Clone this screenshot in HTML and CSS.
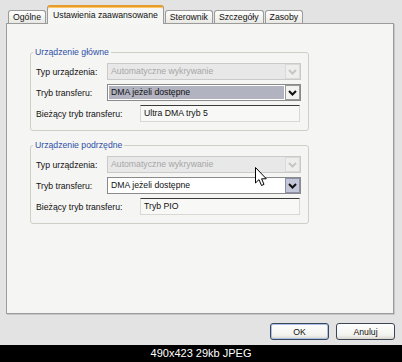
FILE: index.html
```html
<!DOCTYPE html>
<html lang="pl">
<head>
  <meta charset="UTF-8" />
  <title>Właściwości - Ustawienia zaawansowane</title>
  <link rel="stylesheet" href="styles.css">
</head>
<body>
  <div class="window">
    <!-- Tabs -->
    <div class="tabs">
      <div class="tab">Ogólne</div>
      <div class="tab active">Ustawienia zaawansowane</div>
      <div class="tab">Sterownik</div>
      <div class="tab">Szczegóły</div>
      <div class="tab">Zasoby</div>
    </div>

    <div class="panel">
      <fieldset class="group">
        <legend>Urządzenie główne</legend>
        <div class="rows">
          <div class="row">
            <span>Typ urządzenia:</span>
            <div class="combo disabled">
              <span class="value">Automatyczne wykrywanie</span>
              <span class="drop"><svg width="9" height="6" viewBox="0 0 9 6"><path d="M1 1 L4.5 4.5 L8 1" /></svg></span>
            </div>
          </div>
          <div class="row">
            <span>Tryb transferu:</span>
            <div class="combo">
              <span class="value selected">DMA jeżeli dostępne</span>
              <span class="drop"><svg width="9" height="6" viewBox="0 0 9 6"><path d="M1 1 L4.5 4.5 L8 1" /></svg></span>
            </div>
          </div>
          <div class="row">
            <span>Bieżący tryb transferu:</span>
            <div class="field">Ultra DMA tryb 5</div>
          </div>
        </div>
      </fieldset>

      <fieldset class="group">
        <legend>Urządzenie podrzędne</legend>
        <div class="rows">
          <div class="row">
            <span>Typ urządzenia:</span>
            <div class="combo disabled">
              <span class="value">Automatyczne wykrywanie</span>
              <span class="drop"><svg width="9" height="6" viewBox="0 0 9 6"><path d="M1 1 L4.5 4.5 L8 1" /></svg></span>
            </div>
          </div>
          <div class="row">
            <span>Tryb transferu:</span>
            <div class="combo">
              <span class="value">DMA jeżeli dostępne</span>
              <span class="drop hover"><svg width="9" height="6" viewBox="0 0 9 6"><path d="M1 1 L4.5 4.5 L8 1" /></svg></span>
            </div>
          </div>
          <div class="row">
            <span>Bieżący tryb transferu:</span>
            <div class="field">Tryb PIO</div>
          </div>
        </div>
      </fieldset>
    </div>

    <div class="footer">
      <button class="btn default">OK</button>
      <button class="btn">Anuluj</button>
    </div>

    <!-- mouse pointer over the second group -->
    <svg class="cursor" width="13" height="20" viewBox="0 0 13 20">
      <path d="M0.5 0.5 L0.5 16 L4 12.6 L6.5 18.5 L9 17.4 L6.6 11.8 L11.3 11.8 Z" />
    </svg>
  </div>
  <div class="caption">490x423 29kb JPEG</div>
</body>
</html>
```

FILE: styles.css
```css
body {
  margin: 0;
  width: 402px;
  height: 362px;
  overflow: hidden;
  font-family: "Liberation Sans", Arial, sans-serif;
  font-size: 8.7px;
  color: #111;
}
.window {
  position: relative;
  height: 345px;
  box-sizing: border-box;
  padding-top: 5px;
  background: #e3e3e3;
}
.tabs {
  position: relative;
  z-index: 1;
  display: flex;
  align-items: flex-end;
  height: 18px;
  padding-left: 8px;
}
.tab {
  box-sizing: border-box;
  height: 13px;
  line-height: 12px;
  padding: 0 4px;
  margin-right: 1px;
  border: 1px solid #9b9b9b;
  border-bottom: none;
  border-radius: 3px 3px 0 0;
  background: linear-gradient(#ffffff, #e8e8e3);
  white-space: nowrap;
}
.tab.active {
  height: 19px;
  margin-bottom: -1px;
  padding: 0 5px;
  line-height: 16px;
  border-top: 2px solid #e59b2e;
  box-shadow: inset 0 1px 0 #ffc865;
  background: #f6f6f4;
}
.panel {
  box-sizing: border-box;
  height: 291px;
  margin: 0 8px 0 6px;
  padding-top: 23px;
  border: 1px solid #9b9b9b;
  background: #f5f5f3;
  box-shadow: 1px 1px 0 #c6c6c6;
}
.group {
  box-sizing: border-box;
  width: 279px;
  margin: 0 0 9px 23px;
  padding: 5px 7px 8px 5px;
  border: 1px solid #cfcfc6;
  border-radius: 3px;
}
.group legend {
  margin-left: -3px;
  padding: 0 2px;
  line-height: 11px;
  color: #2f4fa6;
}
.rows {
  display: flex;
  flex-direction: column;
  gap: 4px;
}
.row {
  display: flex;
  align-items: center;
  justify-content: space-between;
  height: 17px;
}
.combo {
  box-sizing: border-box;
  display: flex;
  width: 194px;
  height: 17px;
  border: 1px solid #8a8a8a;
  background: #fff;
}
.combo .value {
  flex: 1;
  margin: 1px;
  padding-left: 2px;
  line-height: 13px;
  white-space: nowrap;
}
.combo .value.selected {
  background: #b1b3c0;
}
.combo .drop {
  box-sizing: border-box;
  display: flex;
  align-items: center;
  justify-content: center;
  width: 15px;
  border: 1px solid #9a9a9a;
  background: #f3f3f1;
}
.combo .drop.hover {
  background: #c4c7da;
  border-color: #8d90a6;
}
.combo svg path {
  fill: none;
  stroke: #111;
  stroke-width: 2;
}
.combo.disabled {
  border-color: #cacaca;
  background: #e8e8e8;
  color: #a6a6a6;
}
.combo.disabled .drop {
  border-color: #dadada;
  background: #eeeeec;
}
.combo.disabled svg path {
  stroke: #c6c6c6;
}
.field {
  box-sizing: border-box;
  width: 160px;
  height: 17px;
  margin-right: 1px;
  padding-left: 3px;
  line-height: 15px;
  border: 1px solid #d8d8d4;
  border-top-color: #3a3a3a;
  background: #f8f8f6;
}
.footer {
  display: flex;
  justify-content: flex-end;
  gap: 7px;
  padding: 9px 7px 0 0;
}
.btn {
  width: 59px;
  height: 17px;
  padding: 0;
  font: inherit;
  color: #111;
  border: 1px solid #3b4656;
  border-radius: 3px;
  background: linear-gradient(#ffffff, #f2f2ee 75%, #d9d5cc);
}
.btn.default {
  box-shadow: inset 0 0 0 1px #a9c1ea;
}
.cursor {
  position: absolute;
  left: 255px;
  top: 167px;
}
.cursor path {
  fill: #fff;
  stroke: #000;
  stroke-width: 1;
}
.caption {
  height: 17px;
  line-height: 17px;
  background: #000;
  color: #fff;
  text-align: center;
  font-size: 11px;
}
```
